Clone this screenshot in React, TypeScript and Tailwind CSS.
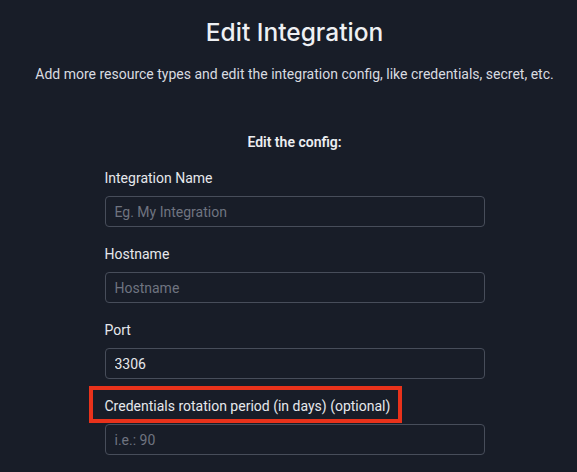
import React from 'react';

const fields = [
  { label: 'Integration Name', placeholder: 'Eg. My Integration', value: '' },
  { label: 'Hostname', placeholder: 'Hostname', value: '' },
  { label: 'Port', placeholder: '', value: '3306' },
  { label: 'Credentials rotation period (in days) (optional)', placeholder: 'i.e.: 90', value: '', marked: true },
];

export default function App() {
  return (
    <div className="min-h-[472px] w-full overflow-hidden bg-[#181d28] pl-[12px] text-[#e6e8ec] font-['Roboto',sans-serif]">
      <h1 className="pt-[17px] text-center font-['Inter',sans-serif] text-[24.5px] font-medium leading-[30px] text-[#eef0f3]">
        Edit Integration
      </h1>
      <p className="mt-[18px] text-center text-[14px] leading-[18px] text-[#d8dbe0]">
        Add more resource types and edit the integration config, like credentials, secret, etc.
      </p>
      <p className="mt-[50px] text-center text-[14px] font-semibold leading-[18px] text-[#eceef1]">
        Edit the config:
      </p>
      <form className="mx-auto mt-[18px] flex w-[380px] flex-col gap-[18px]">
        {fields.map((f) => (
          <label key={f.label} className="flex flex-col">
            <span className="relative text-[14px] leading-[18px] text-[#e6e8ec]">
              {f.label}
              {f.marked && (
                <span className="pointer-events-none absolute -left-[16px] -top-[11px] h-[37px] w-[313px] border-4 border-[#e8321b]" />
              )}
            </span>
            <input
              type="text"
              defaultValue={f.value}
              placeholder={f.placeholder}
              className="mt-[9px] h-[31px] rounded-[4px] border border-[#474d5a] bg-transparent px-[9px] text-[14px] text-[#e6e8ec] outline-none placeholder:text-[#6f7480]"
            />
          </label>
        ))}
      </form>
    </div>
  );
}
